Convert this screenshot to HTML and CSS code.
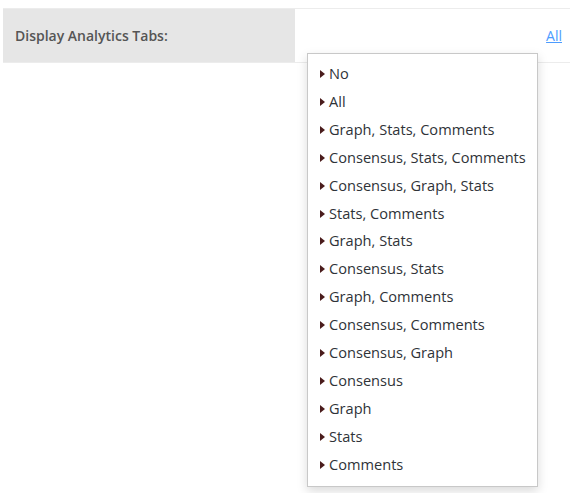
FILE: index.html
```html
<!DOCTYPE html>
<html>
<head>
<meta charset="utf-8">
<link rel="stylesheet" href="styles.css">
</head>
<body>
<div class="row">
  <div class="label">Display Analytics Tabs:</div>
  <div class="value"><a class="link" href="#">All</a></div>
</div>
<ul class="menu">
  <li><span class="caret"></span>No</li>
  <li><span class="caret"></span>All</li>
  <li><span class="caret"></span>Graph, Stats, Comments</li>
  <li><span class="caret"></span>Consensus, Stats, Comments</li>
  <li><span class="caret"></span>Consensus, Graph, Stats</li>
  <li><span class="caret"></span>Stats, Comments</li>
  <li><span class="caret"></span>Graph, Stats</li>
  <li><span class="caret"></span>Consensus, Stats</li>
  <li><span class="caret"></span>Graph, Comments</li>
  <li><span class="caret"></span>Consensus, Comments</li>
  <li><span class="caret"></span>Consensus, Graph</li>
  <li><span class="caret"></span>Consensus</li>
  <li><span class="caret"></span>Graph</li>
  <li><span class="caret"></span>Stats</li>
  <li><span class="caret"></span>Comments</li>
</ul>
</body>
</html>
```
FILE: styles.css
```css
html, body {
  margin: 0;
  padding: 0;
  background: #fff;
  font-family: "Open Sans", "Liberation Sans", sans-serif;
  font-size: 14px;
  color: #333;
}
.row {
  margin: 8px 0 0 3px;
  display: flex;
  border-top: 1px solid #ececec;
  border-bottom: 1px solid #ececec;
  height: 53px;
}
.label {
  width: 292px;
  background: #e6e6e6;
  box-sizing: border-box;
  padding: 0 12px;
  display: flex;
  align-items: center;
  font-weight: 600;
  color: #555;
  font-size: 14px;
}
.value {
  flex: 1;
  display: flex;
  align-items: center;
  justify-content: flex-end;
  padding-right: 8px;
}
.link {
  color: #4d9cff;
  text-decoration: underline;
  font-size: 14px;
}
.menu {
  position: absolute;
  left: 307px;
  top: 53px;
  width: 229px;
  margin: 0;
  padding: 6px 0 7px;
  list-style: none;
  background: #fff;
  border: 1px solid #c8c8c8;
  box-shadow: 0 4px 10px rgba(0, 0, 0, 0.15);
}
.menu li {
  line-height: 27.9px;
  padding-left: 12px;
  white-space: nowrap;
  color: #2f3338;
  font-size: 14.6px;
}
.caret {
  display: inline-block;
  width: 0;
  height: 0;
  border-top: 4.5px solid transparent;
  border-bottom: 4.5px solid transparent;
  border-left: 5px solid #4a1c1c;
  margin-right: 4px;
  vertical-align: 1px;
}
```
